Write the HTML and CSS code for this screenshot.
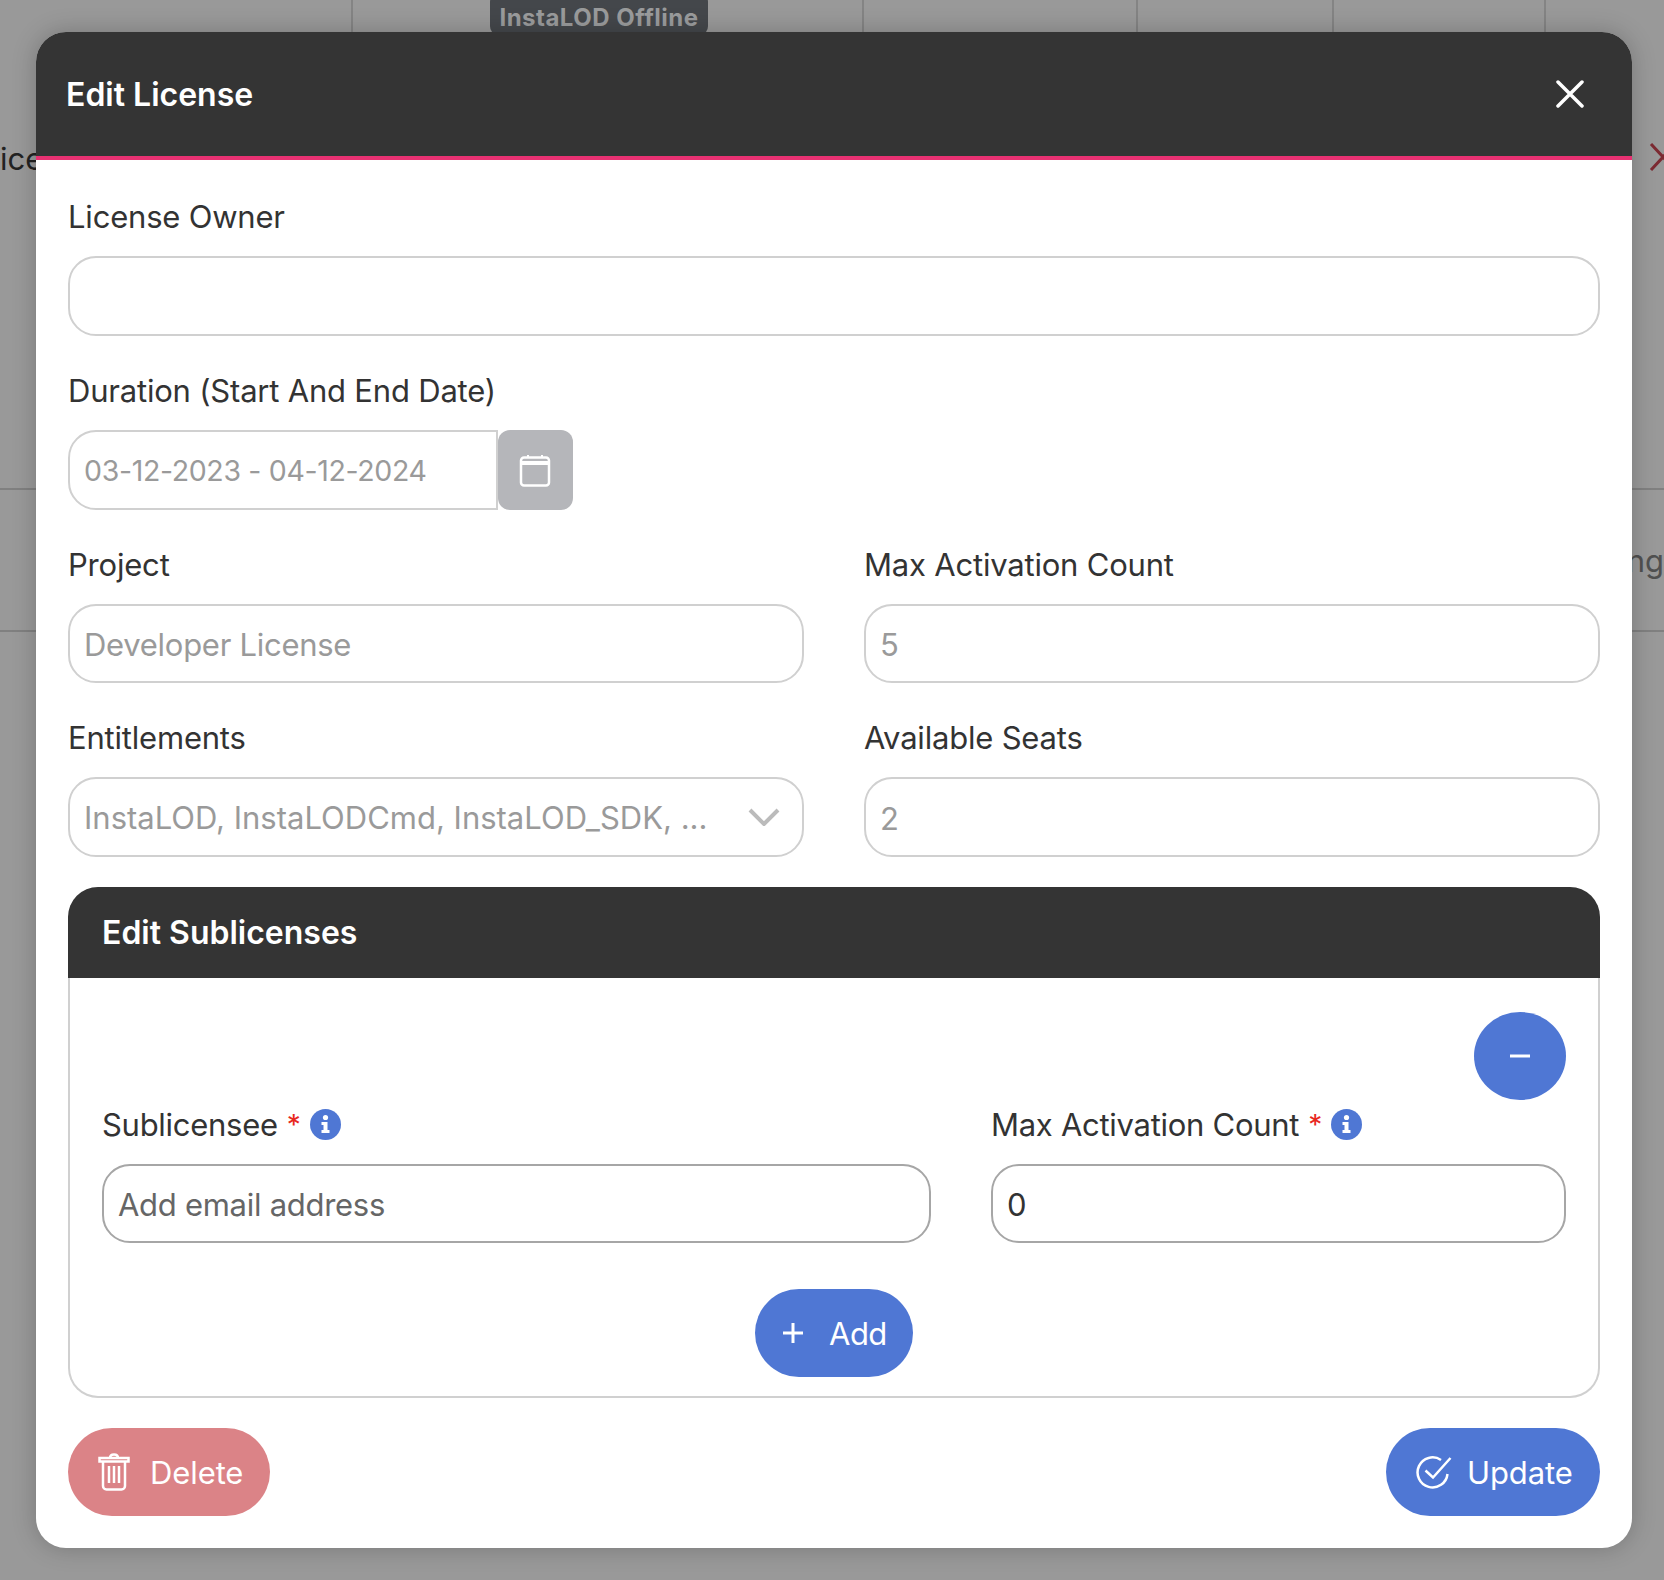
FILE: index.html
```html
<!DOCTYPE html>
<html lang="en">
<head>
<meta charset="utf-8">
<title>Edit License</title>
<link rel="stylesheet" href="styles.css">
</head>
<body>
<div class="page">
  <div class="top-row">
    <div class="col col-a"></div>
    <div class="col col-b"><span class="badge">InstaLOD Offline</span></div>
    <div class="col col-c"></div>
    <div class="col col-d"></div>
    <div class="col col-e"></div>
  </div>
  <div class="row row-one">
    <span class="peek-left">ice</span>
    <svg class="peek-x" width="28" height="28" viewBox="0 0 28 28"><path d="M2 1 L26 27 M26 1 L2 27"/></svg>
  </div>
  <div class="row row-two"><span class="peek-right">ng</span></div>
</div>

<section class="modal">
  <header class="modal-head">
    <h1 class="title">Edit License</h1>
    <svg class="close" width="28" height="28" viewBox="0 0 28 28"><path d="M2 2 L26 26 M26 2 L2 26"/></svg>
  </header>
  <div class="modal-body">
    <div class="field">
      <label class="label">License Owner</label>
      <input class="input tall" type="text" disabled>
    </div>
    <div class="field">
      <label class="label">Duration (Start And End Date)</label>
      <div class="date-group">
        <input class="input tall date-input" type="text" value="03-12-2023 - 04-12-2024" disabled>
        <span class="date-btn">
          <svg width="32" height="33" viewBox="0 0 32 33"><path class="cal-line" d="M5 3.500 H27 A3 3 0 0 1 30 6.500 V28.500 A3 3 0 0 1 27 31.500 H5 A3 3 0 0 1 2 28.500 V6.500 A3 3 0 0 1 5 3.500 Z"/><path class="cal-bar" d="M3 9 H29"/><path class="cal-pin" d="M9 1 V4 M23 1 V4"/></svg>
        </span>
      </div>
    </div>
    <div class="two-col">
      <div class="field">
        <label class="label">Project</label>
        <input class="input" type="text" value="Developer License" disabled>
      </div>
      <div class="field">
        <label class="label">Max Activation Count</label>
        <input class="input" type="text" value="5" disabled>
      </div>
    </div>
    <div class="two-col">
      <div class="field">
        <label class="label">Entitlements</label>
        <div class="select">
          <span>InstaLOD, InstaLODCmd, InstaLOD_SDK, ...</span>
          <svg width="32" height="18" viewBox="0 0 32 18"><path d="M2 2 L16 16 L30 2"/></svg>
        </div>
      </div>
      <div class="field">
        <label class="label">Available Seats</label>
        <input class="input tall" type="text" value="2" disabled>
      </div>
    </div>

    <div class="panel">
      <h2 class="panel-head">Edit Sublicenses</h2>
      <div class="panel-body">
        <div class="remove-row">
          <button class="round-btn" type="button" aria-label="Remove">
            <svg width="20" height="4" viewBox="0 0 20 4"><path d="M0 2 H20"/></svg>
          </button>
        </div>
        <div class="sub-grid">
          <div>
            <div class="label req-label">Sublicensee <span class="star">*</span>
              <svg class="info" width="31" height="31" viewBox="0 0 31 31"><circle class="info-bg" cx="15.500" cy="15.500" r="15.500"/><circle class="info-fg" cx="15.500" cy="8.500" r="2.600"/><path class="info-fg" d="M11.500 13 H17.500 V21 H19.500 V24 H11.500 V21 H13.500 V16 H11.500 Z"/></svg>
            </div>
            <input class="input active" type="text" placeholder="Add email address">
          </div>
          <div>
            <div class="label req-label">Max Activation Count <span class="star">*</span>
              <svg class="info" width="31" height="31" viewBox="0 0 31 31"><circle class="info-bg" cx="15.500" cy="15.500" r="15.500"/><circle class="info-fg" cx="15.500" cy="8.500" r="2.600"/><path class="info-fg" d="M11.500 13 H17.500 V21 H19.500 V24 H11.500 V21 H13.500 V16 H11.500 Z"/></svg>
            </div>
            <input class="input active" type="text" value="0">
          </div>
        </div>
        <div class="add-row">
          <button class="pill add-btn" type="button">
            <svg width="20" height="20" viewBox="0 0 20 20"><path d="M10 0 V20 M0 10 H20"/></svg>
            Add
          </button>
        </div>
      </div>
    </div>

    <div class="footer">
      <button class="pill delete-btn" type="button">
        <svg width="32" height="38" viewBox="0 0 32 38"><path d="M1.500 5 H30.500 V8.500 H1.500 Z M12 5 Q12 1.500 16 1.500 Q20 1.500 20 5 M5 9 V33 A3.500 3.500 0 0 0 8.500 36.500 H23.500 A3.500 3.500 0 0 0 27 33 V9 M11 13 V30 M16 13 V30 M21 13 V30"/></svg>
        Delete
      </button>
      <button class="pill update-btn" type="button">
        <svg width="36" height="34" viewBox="0 0 36 34"><path d="M25 5 A15 15 0 1 0 31.500 19 M9.500 15.500 L17 22.500 L34.500 3"/></svg>
        Update
      </button>
    </div>
  </div>
</section>
</body>
</html>
```

FILE: styles.css
```css
* { box-sizing: border-box; }

html, body {
  margin: 0;
  height: 1580px;
  overflow: hidden;
}

body {
  background: #999999;
  font-family: Inter, "Liberation Sans", sans-serif;
  color: #333333;
}

/* page behind the backdrop */
.page { width: 1664px; }

.top-row {
  display: flex;
  height: 32px;
  overflow: hidden;
}

.col {
  height: 32px;
  border-right: 2px solid #848484;
}
.col-a { width: 353px; }
.col-b { width: 511px; padding-left: 137px; }
.col-c { width: 274px; }
.col-d { width: 196px; }
.col-e { width: 212px; }

.badge {
  display: block;
  width: 218px;
  height: 44px;
  margin-top: -8px;
  padding-top: 10px;
  border-radius: 10px;
  background: #44474b;
  color: #9a9b9c;
  font-size: 24px;
  font-weight: 700;
  line-height: 32px;
  text-align: center;
  letter-spacing: 0.5px;
}

.row {
  display: flex;
  justify-content: space-between;
  overflow: hidden;
  border-bottom: 2px solid #808080;
}

.row-one {
  height: 458px;
  padding-top: 107px;
  align-items: flex-start;
}

.row-two {
  height: 142px;
  padding-top: 51px;
  justify-content: flex-end;
}

.peek-left {
  font-size: 31px;
  line-height: 40px;
  color: #222222;
}

.peek-right {
  font-size: 31px;
  line-height: 40px;
  color: #505050;
}

.peek-x {
  margin: 4px -13px 0 0;
}
.peek-x path {
  fill: none;
  stroke: #7c2a32;
  stroke-width: 3;
}

/* modal */
.modal {
  position: absolute;
  left: 36px;
  top: 32px;
  width: 1596px;
  height: 1516px;
  border-radius: 30px;
  background: #ffffff;
  box-shadow: 0 0 24px rgba(0, 0, 0, 0.22);
  overflow: hidden;
}

.modal-head {
  display: flex;
  align-items: center;
  justify-content: space-between;
  height: 128px;
  padding: 0 48px 0 30px;
  background: #343434;
  border-bottom: 4px solid #e83172;
}

.title {
  margin: 2px 0 0;
  color: #ffffff;
  font-size: 32px;
  font-weight: 600;
  line-height: 40px;
}

.close path {
  fill: none;
  stroke: #ffffff;
  stroke-width: 3.500;
  stroke-linecap: round;
}

.modal-body {
  display: flex;
  flex-direction: column;
  gap: 35px;
  padding: 37px 32px 32px;
}

.label {
  display: block;
  margin-bottom: 19px;
  font-size: 31px;
  letter-spacing: -0.2px;
  line-height: 40px;
  color: #333333;
}

.input {
  display: block;
  width: 100%;
  height: 79px;
  padding: 2px 14px 0;
  border: 2px solid #d0d0d0;
  border-radius: 28px;
  background: #ffffff;
  color: #9a9a9a;
  font-family: inherit;
  font-size: 31px;
  letter-spacing: -0.28px;
  outline: none;
}

.input.tall { height: 80px; }

.input:disabled { -webkit-text-fill-color: #9a9a9a; opacity: 1; }

.input.active {
  border-color: #a6a6a6;
  color: #333333;
}
.input.active::placeholder { color: #666666; opacity: 1; }

.date-group { display: flex; }

.date-input {
  width: 430px;
  padding-top: 0;
  border-radius: 28px 0 0 28px;
  font-size: 28.500px;
  letter-spacing: -0.35px;
}

.date-btn {
  display: flex;
  align-items: center;
  justify-content: center;
  width: 75px;
  height: 80px;
  padding-right: 1px;
  border-radius: 12px;
  background: #b5b6ba;
}

.cal-line, .cal-bar, .cal-pin {
  fill: none;
  stroke: #ffffff;
}
.cal-line { stroke-width: 2.500; }
.cal-bar { stroke-width: 4; }
.cal-pin { stroke-width: 2; }

.two-col {
  display: grid;
  grid-template-columns: 736px 736px;
  column-gap: 60px;
}

.select {
  display: flex;
  align-items: center;
  justify-content: space-between;
  height: 80px;
  padding: 0 22px 0 14px;
  border: 2px solid #d0d0d0;
  border-radius: 28px;
  color: #9a9a9a;
  font-size: 31px;
}

.select svg { margin-top: -1px; }

.select svg path {
  fill: none;
  stroke: #bbbbbb;
  stroke-width: 4;
}

/* sublicenses panel */
.panel { margin-top: -5px; }

.panel-head {
  margin: 0;
  padding: 26px 34px 25px;
  height: 91px;
  border-radius: 30px 30px 0 0;
  background: #343434;
  color: #ffffff;
  font-size: 32px;
  font-weight: 600;
  line-height: 40px;
}

.panel-body {
  height: 420px;
  padding: 34px 32px 18px;
  border: 2px solid #d0d0d0;
  border-top: 0;
  border-radius: 0 0 30px 30px;
}

.remove-row {
  display: flex;
  justify-content: flex-end;
  margin-bottom: 5px;
}

.round-btn {
  display: flex;
  align-items: center;
  justify-content: center;
  width: 92px;
  height: 88px;
  padding: 0;
  border: 0;
  border-radius: 50%;
  background: #4f77d4;
}
.round-btn path, .add-btn path {
  fill: none;
  stroke: #ffffff;
  stroke-width: 3;
}

.sub-grid {
  display: grid;
  grid-template-columns: 829px 575px;
  column-gap: 60px;
}

.req-label {
  display: flex;
  align-items: center;
  gap: 9px;
  letter-spacing: -0.28px;
}

.star { color: #e8281e; font-size: 28px; }

.info { flex: none; margin-top: -2px; }
.info-bg { fill: #4f77d4; }
.info-fg { fill: #ffffff; }

.add-row {
  display: flex;
  justify-content: center;
  margin-top: 46px;
}

.pill {
  display: flex;
  align-items: center;
  height: 88px;
  border: 0;
  border-radius: 44px;
  color: #ffffff;
  font-family: inherit;
  font-size: 31px;
  letter-spacing: -0.1px;
}

.add-btn {
  width: 158px;
  gap: 26px;
  padding: 0 0 0 28px;
  letter-spacing: -0.5px;
  background: #4f77d4;
}

.footer {
  display: flex;
  justify-content: space-between;
  margin-top: -5px;
}

.delete-btn {
  width: 202px;
  gap: 20px;
  padding: 0 0 0 30px;
  background: #db8387;
}
.delete-btn path {
  fill: none;
  stroke: #ffffff;
  stroke-width: 2.500;
}

.update-btn {
  width: 214px;
  gap: 15px;
  padding: 0 0 0 30px;
  background: #4f77d4;
}
.update-btn path {
  fill: none;
  stroke: #ffffff;
  stroke-width: 2.500;
}
```
